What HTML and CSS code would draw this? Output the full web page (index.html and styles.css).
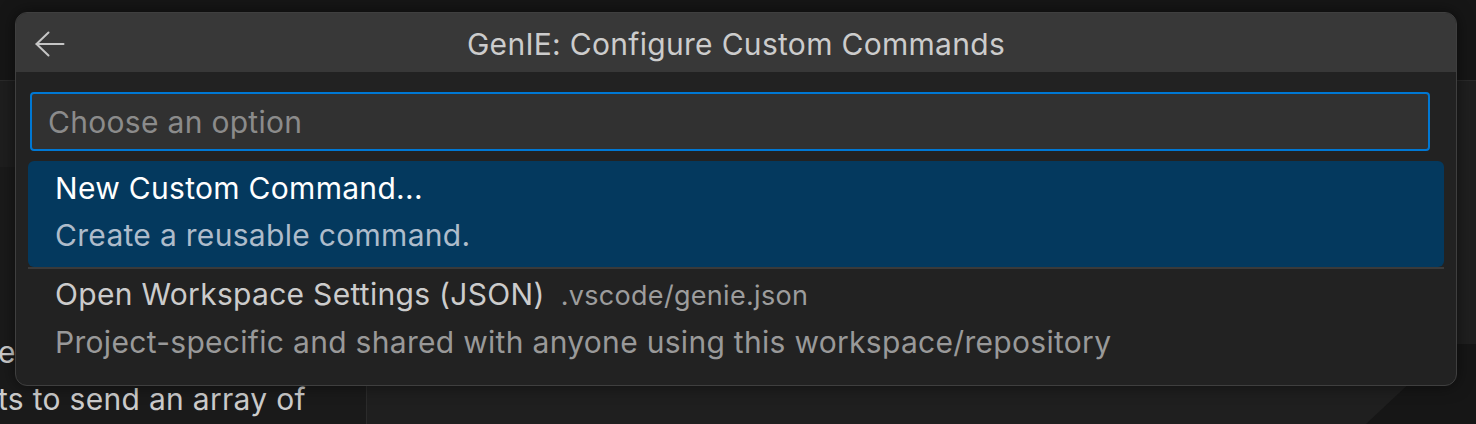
FILE: index.html
```html
<!DOCTYPE html>
<html lang="en">
<head>
    <meta charset="UTF-8">
    <title>GenIE: Configure Custom Commands</title>
    <link rel="stylesheet" href="styles.css">
</head>
<body>
    <div class="workbench">
        <div class="top-strip"></div>
        <div class="main-area">
            <div class="side-panel">
                <div class="side-band"></div>
                <p class="side-text">e<br>ts to send an array of</p>
            </div>
            <div class="editor-area">
                <div class="corner-shade"></div>
            </div>
        </div>
    </div>

    <!-- Quick pick -->
    <div class="quick-input">
        <div class="title-bar">
            <button class="back-btn" aria-label="Back">
                <svg width="30" height="26" viewBox="0 0 30 26" fill="none" stroke="#c5c5c5" stroke-width="2" stroke-linecap="round" stroke-linejoin="round">
                    <path d="M1.5 13 H28.5"/>
                    <path d="M13.5 1.5 L1.5 13 L13.5 24.5"/>
                </svg>
            </button>
            <div class="title">GenIE: Configure Custom Commands</div>
        </div>
        <div class="quick-body">
            <div class="filter-box">
                <input type="text" class="filter-input" placeholder="Choose an option">
            </div>
            <div class="pick-list">
                <div class="pick-item selected">
                    <div class="pick-label">New Custom Command...</div>
                    <div class="pick-detail">Create a reusable command.</div>
                </div>
                <div class="pick-item">
                    <div class="pick-label">Open Workspace Settings (JSON)<span class="pick-desc">.vscode/genie.json</span></div>
                    <div class="pick-detail">Project-specific and shared with anyone using this workspace/repository</div>
                </div>
            </div>
        </div>
    </div>
</body>
</html>
```

FILE: styles.css
```css
body {
    margin: 0;
    width: 1476px;
    height: 424px;
    overflow: hidden;
    background: #181818;
    font-family: 'Inter', 'Liberation Sans', sans-serif;
    letter-spacing: 0.3px;
    color: #cccccc;
}

.workbench {
    display: flex;
    flex-direction: column;
    height: 424px;
}

.top-strip {
    height: 80px;
    background: #161616;
    border-bottom: 1px solid #2a2a2a;
}

.main-area {
    flex: 1;
    display: flex;
}

.side-panel {
    width: 366px;
    background: #1a1a1a;
    border-right: 1px solid #2b2b2b;
    display: flex;
    flex-direction: column;
}

.side-band {
    height: 86px;
    background: #1e1e1e;
}

.side-text {
    margin: 162px 0 0 -2px;
    font-size: 30px;
    line-height: 47px;
    color: #cccccc;
    white-space: nowrap;
}

.editor-area {
    flex: 1;
    background: #1f1f1f;
    position: relative;
    overflow: hidden;
}

.corner-shade {
    position: absolute;
    right: 0;
    bottom: 0;
    width: 110px;
    height: 80px;
    background: #161616;
    clip-path: polygon(0 100%, 62% 20%, 80% 0, 100% 0, 100% 100%);
}

/* Quick pick dialog */
.quick-input {
    position: absolute;
    left: 15px;
    top: 12px;
    width: 1440px;
    height: 372px;
    border: 1px solid #3f3f3f;
    border-radius: 12px;
    background: #222222;
    overflow: hidden;
    box-shadow: 0 0 16px rgba(0, 0, 0, 0.5);
}

.title-bar {
    height: 59px;
    background: #383838;
    display: flex;
    align-items: center;
    position: relative;
}

.back-btn {
    background: none;
    border: none;
    padding: 0;
    margin-left: 19px;
    margin-top: 2px;
    width: 30px;
    height: 26px;
    display: flex;
    cursor: pointer;
}

.title {
    position: absolute;
    left: 0;
    right: 0;
    top: 13px;
    text-align: center;
    font-size: 30px;
    line-height: 36px;
    color: #cccccc;
    pointer-events: none;
}

.quick-body {
    padding: 20px 12px 0 12px;
}

.filter-box {
    margin-left: 2px;
    width: 1396px;
    height: 55px;
    border: 2px solid #0078d4;
    border-radius: 4px;
    background: #313131;
    display: flex;
}

.filter-input {
    flex: 1;
    background: transparent;
    border: none;
    outline: none;
    padding: 0 16px;
    font-family: inherit;
    letter-spacing: 0.3px;
    font-size: 30px;
    color: #cccccc;
}

.filter-input::placeholder {
    color: #8b8b8b;
}

.pick-list {
    margin-top: 10px;
    width: 1416px;
}

.pick-item {
    height: 106px;
    padding: 4px 0 0 27px;
    box-sizing: border-box;
    border-radius: 6px;
}

.pick-item + .pick-item {
    border-top: 2px solid #3a3a3a;
    border-radius: 0;
    height: 98px;
    padding-top: 2px;
}

.pick-item.selected {
    background: #04395e;
}

.pick-label {
    font-size: 30px;
    line-height: 47px;
    color: #cccccc;
    white-space: nowrap;
}

.selected .pick-label {
    color: #ffffff;
}

.pick-desc {
    font-size: 27px;
    color: #9d9d9d;
    margin-left: 16px;
}

.pick-detail {
    font-size: 30px;
    line-height: 47px;
    color: #999999;
    white-space: nowrap;
}

.selected .pick-detail {
    color: #aebccb;
}
```
